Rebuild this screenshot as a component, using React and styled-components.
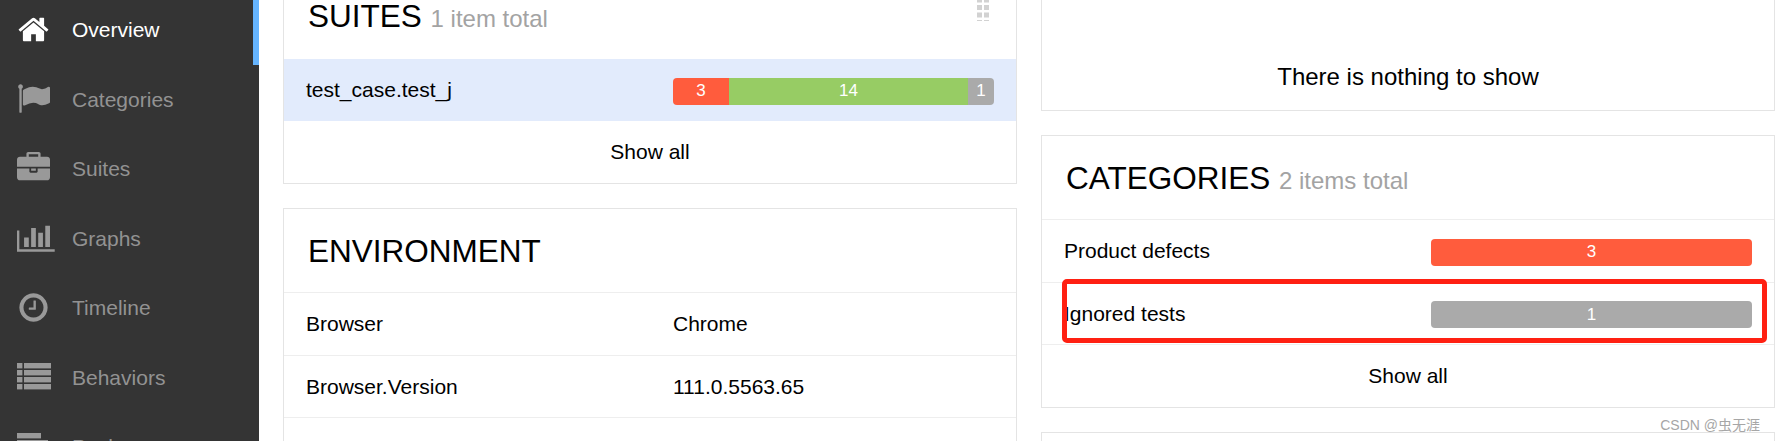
import React from 'react';
import styled, { createGlobalStyle } from 'styled-components';

const GlobalStyle = createGlobalStyle`
    html, body {
        margin: 0;
        padding: 0;
        height: 100%;
        overflow: hidden;
        background: #fff;
        font-family: "Liberation Sans", Arial, sans-serif;
    }
`;

const Page = styled.div`
    position: relative;
    display: flex;
    width: 1776px;
    height: 441px;
    overflow: hidden;
`;

const Sidebar = styled.nav`
    width: 259px;
    flex-shrink: 0;
    background: #343434;
    overflow: hidden;
`;

const NavList = styled.div`
    margin-top: -4.5px;
`;

const NavItem = styled.a`
    display: flex;
    align-items: center;
    height: 69.5px;
    padding-left: 17px;
    box-sizing: border-box;
    font-size: 21px;
    color: ${(p) => (p.$active ? '#fff' : '#929292')};
    border-right: 6px solid ${(p) => (p.$active ? '#66b5ff' : 'transparent')};
`;

const IconSlot = styled.span`
    display: flex;
    width: 55px;
    flex-shrink: 0;
    align-items: center;
    margin-top: -2px;
    svg { display: block; }
`;

const Content = styled.main`
    flex: 1;
    display: grid;
    grid-template-columns: 734px 734px;
    column-gap: 24px;
    padding-left: 24px;
    min-width: 0;
`;

const Column = styled.div`
    display: flex;
    flex-direction: column;
    gap: 24px;
    min-width: 0;
`;

const Card = styled.section`
    border: 1px solid #e4e4e4;
    border-top: ${(p) => (p.$clipped ? 'none' : '1px solid #e4e4e4')};
    background: #fff;
    position: relative;
    height: ${(p) => p.$height || 'auto'};
    flex-shrink: 0;
    box-sizing: border-box;
`;

const CardHead = styled.header`
    height: ${(p) => p.$height || '84px'};
    display: flex;
    align-items: ${(p) => (p.$clipped ? 'flex-start' : 'center')};
    padding-left: 24px;
    box-sizing: border-box;
    border-bottom: 1px solid ${(p) => (p.$clipped ? 'transparent' : '#eee')};
`;

const Title = styled.h2`
    margin: 0;
    font-size: 31.5px;
    font-weight: 400;
    line-height: ${(p) => (p.$tight ? '32px' : '36px')};
    color: #000;
`;

const Count = styled.small`
    font-size: 24px;
    line-height: 0;
    color: #a3a3a3;
`;

const Row = styled.div`
    display: grid;
    grid-template-columns: 1fr 321px;
    align-items: center;
    height: ${(p) => p.$height || '62.6px'};
    padding: 1px 22px 0;
    box-sizing: border-box;
    font-size: 21px;
    color: #000;
    background: ${(p) => (p.$selected ? '#e2ebfc' : 'transparent')};
    border-bottom: 1px solid ${(p) => (p.$selected ? 'transparent' : '#eee')};
`;

const EnvRow = styled(Row)`
    grid-template-columns: 367px 1fr;
`;

const Bar = styled.div`
    display: flex;
    height: 27px;
    margin-top: 2px;
    border-radius: 4px;
    overflow: hidden;
`;

const Segment = styled.span`
    flex: ${(p) => p.$grow} 1 0;
    min-width: 0;
    display: flex;
    align-items: center;
    justify-content: center;
    font-size: 17px;
    color: #fff;
    background: ${(p) => p.$color};
`;

const ShowAll = styled.div`
    height: 62px;
    display: flex;
    align-items: center;
    justify-content: center;
    font-size: 21px;
    color: #000;
`;

const Handle = styled.svg`
    position: absolute;
    right: 27px;
    top: 0;
    display: block;
`;

const Nothing = styled.div`
    height: 110px;
    display: flex;
    align-items: flex-end;
    justify-content: center;
    padding-bottom: 19px;
    box-sizing: border-box;
    font-size: 24px;
    color: #000;
`;

const Highlight = styled.div`
    position: absolute;
    left: 20px;
    right: 7px;
    top: 143px;
    height: 64px;
    border: 5px solid #ff2012;
    border-radius: 5px;
    box-sizing: border-box;
`;

const Watermark = styled.div`
    position: absolute;
    right: 16px;
    top: 414px;
    font-family: "Liberation Sans", "Noto Sans CJK SC", sans-serif;
    font-size: 14px;
    color: #a6a6a6;
`;

const Glyph = ({ width = 1792, size = 33, color = '#999', d }) => (
    <svg width={(size * width) / 1792} height={size} viewBox={`0 0 ${width} 1792`} fill={color}>
        <path d={d} />
    </svg>
);

const HOME = 'M1472 992v480q0 26-19 45t-45 19h-384v-384h-256v384h-384q-26 0-45-19t-19-45v-480q0-1 .5-3t.5-3l575-474 575 474q1 2 1 6zm223-69l-62 74q-8 9-21 11h-3q-13 0-21-7l-692-577-692 577q-12 8-24 7-13-2-21-11l-62-74q-8-10-7-23.5t11-21.5l719-599q32-26 76-26t76 26l244 204v-195q0-14 9-23t23-9h192q14 0 23 9t9 23v408l219 182q10 8 11 21.5t-7 23.5z';
const FLAG = 'M320 256q0 72-64 110v1266q0 13-9.5 22.5t-22.5 9.5h-64q-13 0-22.5-9.5t-9.5-22.5v-1266q-64-38-64-110 0-53 37.5-90.5t90.5-37.5 90.5 37.5 37.5 90.5zm1472 64v763q0 25-12.5 38.5t-39.5 27.5q-215 116-369 116-61 0-123.5-22t-108.5-48-115.5-48-142.5-22q-192 0-464 146-17 9-33 9-26 0-45-19t-19-45v-742q0-32 31-55 21-14 79-43 236-120 421-120 107 0 200 29t219 88q38 19 88 19 54 0 117.5-21t110-47 88-47 54.5-21q26 0 45 19t19 45z';
const BRIEFCASE = 'M640 256h512v-128h-512v128zm1152 640v480q0 66-47 113t-113 47h-1472q-66 0-113-47t-47-113v-480h672v160q0 26 19 45t45 19h320q26 0 45-19t19-45v-160h672zm-768 0v128h-256v-128h256zm768-480v384h-1792v-384q0-66 47-113t113-47h352v-160q0-40 28-68t68-28h576q40 0 68 28t28 68v160h352q66 0 113 47t47 113z';
const CHART = 'M640 896v512h-256v-512h256zm384-512v1024h-256v-1024h256zm1024 1152v128h-2048v-1152h128v1024h1920zm-640-896v768h-256v-768h256zm384-384v1152h-256v-1152h256z';
const CLOCK = 'M1024 544v448q0 14-9 23t-23 9h-320q-14 0-23-9t-9-23v-64q0-14 9-23t23-9h224v-352q0-14 9-23t23-9h64q14 0 23 9t9 23zm416 352q0-148-73-273t-198-198-273-73-273 73-198 198-73 273 73 273 198 198 273 73 273-73 198-198 73-273zm224 0q0 209-103 385.5t-279.5 279.5-385.5 103-385.5-103-279.5-279.5-103-385.5 103-385.5 279.5-279.5 385.5-103 385.5 103 279.5 279.5 103 385.5z';

const ListIcon = () => (
    <svg width="34" height="27" viewBox="0 0 34 27" fill="#999">
        {[0, 7, 14, 21].map((y) => (
            <g key={y}>
                <rect x="0" y={y} width="5.4" height="5.4" />
                <rect x="7" y={y} width="27" height="5.4" />
            </g>
        ))}
    </svg>
);

const AlignIcon = () => (
    <svg width="34" height="27" viewBox="0 0 34 27" fill="#999">
        <rect x="0" y="0" width="24" height="5.4" />
        <rect x="0" y="7" width="31" height="5.4" />
        <rect x="0" y="14" width="20" height="5.4" />
        <rect x="0" y="21" width="28" height="5.4" />
    </svg>
);

const navItems = [
    { label: 'Overview', icon: <Glyph d={HOME} color="#fff" />, active: true },
    { label: 'Categories', icon: <Glyph d={FLAG} /> },
    { label: 'Suites', icon: <Glyph d={BRIEFCASE} /> },
    { label: 'Graphs', icon: <Glyph d={CHART} width={2048} /> },
    { label: 'Timeline', icon: <Glyph d={CLOCK} /> },
    { label: 'Behaviors', icon: <ListIcon /> },
    { label: 'Packages', icon: <AlignIcon /> },
];

function App() {
    return (
        <Page>
            <GlobalStyle />
            <Sidebar>
                <NavList>
                    {navItems.map((item) => (
                        <NavItem key={item.label} $active={item.active}>
                            <IconSlot>{item.icon}</IconSlot>
                            {item.label}
                        </NavItem>
                    ))}
                </NavList>
            </Sidebar>
            <Content>
                <Column>
                    <Card $clipped $height="184px">
                        <Handle width="12" height="21" viewBox="0 0 12 21" fill="#d2d2d2">
                            {[-2.5, 5, 12.5, 20].map((y) => (
                                <g key={y}>
                                    <rect x="0" y={y} width="5" height="5" />
                                    <rect x="7" y={y} width="5" height="5" />
                                </g>
                            ))}
                        </Handle>
                        <CardHead $clipped $height="59px">
                            <Title $tight>SUITES <Count>1 item total</Count></Title>
                        </CardHead>
                        <Row $selected $height="62px">
                            <span>test_case.test_j</span>
                            <Bar>
                                <Segment $grow={56} $color="#ff5c3d">3</Segment>
                                <Segment $grow={239} $color="#97cc64">14</Segment>
                                <Segment $grow={26} $color="#aaa">1</Segment>
                            </Bar>
                        </Row>
                        <ShowAll>Show all</ShowAll>
                    </Card>
                    <Card>
                        <CardHead>
                            <Title>ENVIRONMENT</Title>
                        </CardHead>
                        <EnvRow><span>Browser</span><span>Chrome</span></EnvRow>
                        <EnvRow><span>Browser.Version</span><span>111.0.5563.65</span></EnvRow>
                        <EnvRow />
                    </Card>
                </Column>
                <Column>
                    <Card $clipped>
                        <Nothing>There is nothing to show</Nothing>
                    </Card>
                    <Card>
                        <CardHead>
                            <Title>CATEGORIES <Count>2 items total</Count></Title>
                        </CardHead>
                        <Row>
                            <span>Product defects</span>
                            <Bar><Segment $grow={1} $color="#ff5c3d">3</Segment></Bar>
                        </Row>
                        <Row>
                            <span>Ignored tests</span>
                            <Bar><Segment $grow={1} $color="#aaa">1</Segment></Bar>
                        </Row>
                        <ShowAll>Show all</ShowAll>
                        <Highlight />
                    </Card>
                    <Card $height="40px" />
                </Column>
            </Content>
            <Watermark>CSDN @虫无涯</Watermark>
        </Page>
    );
}

export default App;
